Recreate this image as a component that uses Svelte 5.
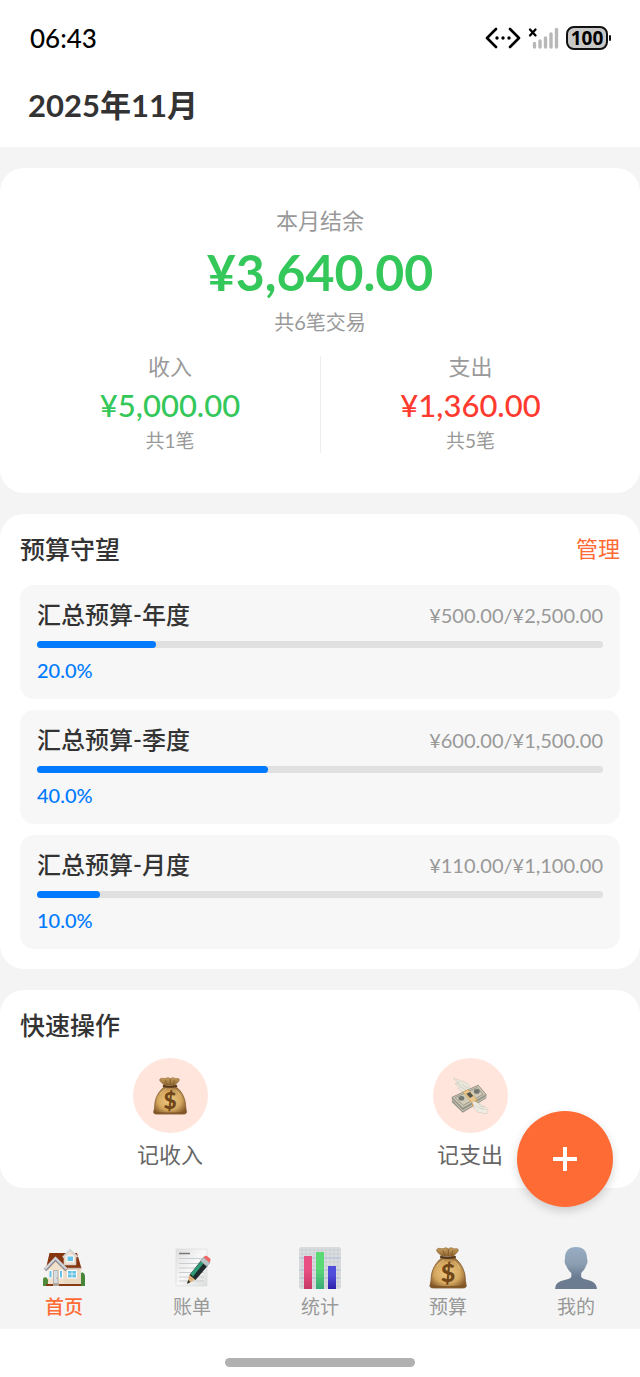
<script>
  const budgets = [
    { name: '汇总预算-年度', used: '500.00', total: '2,500.00', percent: 20 },
    { name: '汇总预算-季度', used: '600.00', total: '1,500.00', percent: 40 },
    { name: '汇总预算-月度', used: '110.00', total: '1,100.00', percent: 10 }
  ];
  const flows = [
    { label: '收入', amount: '¥5,000.00', count: '共1笔', tone: 'income' },
    { label: '支出', amount: '¥1,360.00', count: '共5笔', tone: 'expense' }
  ];
  const tabs = [
    { label: '首页', icon: home },
    { label: '账单', icon: memo },
    { label: '统计', icon: chart },
    { label: '预算', icon: bag },
    { label: '我的', icon: person }
  ];
  let active = $state('首页');
</script>

{#snippet bag()}
  <svg viewBox="0 0 42 42" aria-hidden="true">
    <defs>
      <radialGradient id="bagBody" cx="48%" cy="50%" r="58%">
        <stop offset="0" stop-color="#efc985" />
        <stop offset="0.6" stop-color="#d5a85f" />
        <stop offset="1" stop-color="#84592a" />
      </radialGradient>
      <linearGradient id="bagNeck" x1="0" y1="0" x2="0" y2="1">
        <stop offset="0" stop-color="#c99f5c" />
        <stop offset="1" stop-color="#8d6430" />
      </linearGradient>
    </defs>
    <path d="M14.500 9C12 6 8.500 4.500 10 2.200c1.500-2 4.500.3 6.500-.7 1.700-1 3.300-.8 4.800.4 2-1.500 3.700-1.200 5-.4 1.600.9 3.500-.5 4.700.8 1.500 2-2.500 4-4.300 7.200Z" fill="url(#bagNeck)" stroke="#845b2b" stroke-width=".6" />
    <path d="M16 3.500l1.800 5M21.300 2v6.500M26 3.500l-1.500 5" stroke="#7a5428" stroke-width=".8" fill="none" />
    <path d="M14.500 11h13.300c5.200 4 10.200 11.500 10.500 20.500 0 3 .8 5.500 1 7.500-.3 1.700-2 2-4 2H7.500c-2.700 0-4.500-.3-4.600-2 .2-2 1.200-4 1.200-7C4.300 22.500 9 15.500 14.500 11Z" fill="url(#bagBody)" stroke="#7d5628" stroke-width=".8" />
    <path d="M3.500 38.800c6 1.500 28 1.600 35 0" fill="none" stroke="#805629" stroke-width="1.500" />
    <path d="M14 10q7 1.700 14 0" fill="none" stroke="#56391a" stroke-width="2.200" stroke-linecap="round" />
    <path d="M10 19q3-4 7-6M33 22q-2-5-6-8" fill="none" stroke="#eed092" stroke-width="1" opacity=".7" />
    <text x="21" y="35" text-anchor="middle" font-family="Lato, sans-serif" font-size="25" font-weight="900" fill="#714719">$</text>
  </svg>
{/snippet}

{#snippet cash()}
  <svg viewBox="0 0 42 42" aria-hidden="true">
    <path d="M3 1c1 4 4 4 4.500 6.500l-3-.5c1 3 4 3 5 5l-2 .3c2 2.500 6 4.500 9.500 5l5-3.500c-2-1.500-1-6.500-5-7.500-2-.5-2.500-1-4-2.500L12 5.500C10 2 6 4 3 1Z" fill="#e9e6dc" stroke="#cdc9bc" stroke-width=".6" />
    <path d="M7 5q2 6 10 10M12 7.500q2 3 7 5" stroke="#c2beb1" stroke-width=".7" fill="none" />
    <path d="M1 22.500 30 9l9 10.500v4L13 39.500 1 28Z" fill="#98958a" />
    <path d="M1.500 25l11.500 12.300L38.500 22" stroke="#d0cdc2" stroke-width="1" fill="none" />
    <path d="M1 22.500 30 9l9 10.500L13 34.500Z" fill="#cfc9b5" stroke="#85837a" stroke-width=".8" />
    <path d="M4.500 22.800 29 11.500l6.500 7.700L13.500 31.500Z" fill="none" stroke="#8d8d82" stroke-width=".9" />
    <ellipse cx="11.500" cy="23.500" rx="3.200" ry="2.600" fill="#717770" />
    <ellipse cx="28.500" cy="16" rx="3.200" ry="2.600" fill="#717770" />
    <path d="M13.500 16.700 19 14l9.500 11.500-5.300 3.300Z" fill="#e9c68c" stroke="#d9a557" stroke-width=".8" />
    <path d="m17 18.500 4-1.800 3.500 4.300-3.500 2.200Z" fill="#53574e" />
    <path d="M23.200 28.500v4l5.300-3.200v-3.500Z" fill="#d39b4b" />
    <path d="M23 28c2 .5 1 4 3.500 5.500l-2 .5c2 1 2.500 3 5 3l-1 1.500c3 1.500 4 0 6 1.500l5.500.5c-1-2 1.500-2.500 1-4l-3-1c1.500-1 1-2.500-.5-2.500-3 .5-3-3.500-6-3.500-3 0-4-4-8.500-1.500Z" fill="#efece3" stroke="#cbc7ba" stroke-width=".6" />
    <path d="M27 31q4 4 10 5M30 29.500q3 4 7 4" stroke="#c2beb1" stroke-width=".7" fill="none" />
  </svg>
{/snippet}

{#snippet home()}
  <svg viewBox="0 0 42 42" aria-hidden="true">
    <path d="M0 39v-6q0-3 2.200-2.800Q4.500 30 5 33v6Z" fill="#4f8b3b" />
    <path d="M37 39V28q.5-3 2.500-2.500Q42 26 42 30v9Z" fill="#478638" />
    <path d="M5 21h33v17H5Z" fill="#ead9c5" />
    <path d="M6.500 6H34l4.500 15.500H3Z" fill="#86350f" />
    <path d="M21 21.500h17" stroke="#c9bfb5" stroke-width="1.500" />
    <path d="M21 10 27 4l6 5.500V18H21Z" fill="#f0e2d2" stroke="#c5bcb3" stroke-width=".7" />
    <path d="m20 10.500 7-7.500 7.500 7" fill="none" stroke="#d8d7d8" stroke-width="2" />
    <path d="M24 9h6.500v5.500H24Z" fill="#68c5e9" stroke="#f8fafa" stroke-width="1" />
    <path d="M5 21 12.500 13l9 8.500V38H5Z" fill="#f0dfca" />
    <path d="M2 23 12.500 12l11 11" fill="none" stroke="#8f8c90" stroke-width="3.400" />
    <path d="M2 22 12.500 11l11 11" fill="none" stroke="#d1d3d9" stroke-width="2.200" />
    <path d="M6 23.500h3v7.500H6ZM16.500 23.500h3v7.500h-3ZM24.500 23.500h9v7.500h-9Z" fill="#65c1e7" stroke="#fff" stroke-width="1" />
    <path d="M29 23.500v7.500M24.500 27h9" stroke="#e9f4f4" stroke-width=".8" />
    <path d="M10.500 23.500H15V37h-4.500Z" fill="#d9dde0" stroke="#a8aaab" stroke-width=".8" />
    <circle cx="14" cy="31" r=".6" fill="#8d7451" />
    <path d="M3 37h35v2H3Z" fill="#873b14" />
    <path d="M10 36h6v3h-6Z" fill="#b0a59a" />
  </svg>
{/snippet}

{#snippet memo()}
  <svg viewBox="0 0 42 42" aria-hidden="true">
    <defs>
      <linearGradient id="paper" x1="0" y1="0" x2="1" y2="1">
        <stop offset="0" stop-color="#dfdfdf" />
        <stop offset=".5" stop-color="#f8f8f8" />
        <stop offset="1" stop-color="#dcdddd" />
      </linearGradient>
    </defs>
    <path d="M5 2h31v37H5Z" fill="url(#paper)" stroke="#d8d9d9" stroke-width=".6" />
    <path d="M8 6.500h11" stroke="#747879" stroke-width="1.500" />
    <path d="M8 11.500h25M8 16.500h25M8 21h25M8 25.500h25M8 30h25M8 34h25" stroke="#c9cdcf" stroke-width="1" />
    <path d="m16 37 2.500-9.500 6 5Z" fill="#dfb078" />
    <path d="m16 37 1.200-4 2.300 1.900Z" fill="#24302e" />
    <path d="M18.500 28 30 13.500l6.500 5.500L24.500 33Z" fill="#20292b" />
    <path d="m19.500 27 11-13.500 2.500 2.200L22 29.500Z" fill="#2f9b76" />
    <path d="m29.500 14 3-3.700 6.500 5.400-3.300 3.600Z" fill="#b8c4c6" stroke="#84949a" stroke-width=".6" />
    <path d="m32.500 10.300 1.500-1.300q1-.7 2.200.2l2.500 2q1.400 1.500.6 2.900l-1 1.300Z" fill="#ef6561" />
  </svg>
{/snippet}

{#snippet chart()}
  <svg viewBox="0 0 42 42" aria-hidden="true">
    <defs>
      <linearGradient id="barGreen" x1="0" y1="0" x2="0" y2="1">
        <stop offset=".45" stop-color="#5bd975" />
        <stop offset="1" stop-color="#39aa79" />
      </linearGradient>
      <linearGradient id="barRed" x1="0" y1="0" x2="0" y2="1">
        <stop offset=".4" stop-color="#e94f83" />
        <stop offset="1" stop-color="#c73866" />
      </linearGradient>
      <linearGradient id="barBlue" x1="0" y1="0" x2="0" y2="1">
        <stop offset=".4" stop-color="#504ddb" />
        <stop offset="1" stop-color="#2c20aa" />
      </linearGradient>
    </defs>
    <rect width="42" height="42" rx="3" fill="#dcdddf" />
    <path d="M3 0v42M7 0v42M11 0v42M15 0v42M19 0v42M23 0v42M27 0v42M31 0v42M35 0v42M39 0v42M0 3h42M0 7h42M0 15h42M0 19h42M0 27h42M0 31h42M0 35h42M0 39h42" stroke="#c5c9cf" stroke-width=".6" />
    <path d="M0 11h42M0 23h42M1 31h40" stroke="#a8b9dc" stroke-width=".9" />
    <path d="M5 9h8v33H5Z" fill="url(#barRed)" />
    <path d="M17 5h8v37h-8Z" fill="url(#barGreen)" />
    <path d="M29 19h8v23h-8Z" fill="url(#barBlue)" />
  </svg>
{/snippet}

{#snippet person()}
  <svg viewBox="0 0 42 42" aria-hidden="true">
    <defs>
      <linearGradient id="bust" x1="0" y1="0" x2="0" y2="1">
        <stop offset="0" stop-color="#98adc3" />
        <stop offset=".4" stop-color="#8c9eb2" />
        <stop offset=".72" stop-color="#6b7c92" />
        <stop offset="1" stop-color="#6d7b8f" />
      </linearGradient>
    </defs>
    <path d="M21 0c7.500 0 11 4.500 11 11l.5 2.500c.3 3-1 4.500-2 6.500-1 2.500-2.800 4.500-4.300 6v4c1.500 3.500 13.300 2 15.300 9.500L42 42H0l.5-2.500c2-7.500 14.300-6 15.800-9.500v-4c-1.700-1.500-3.500-3.500-4.600-6.200-1-1.800-2.400-3.300-2-6.300L10 11C10 4.500 13.500 0 21 0Z" fill="url(#bust)" />
  </svg>
{/snippet}

<div class="app">
  <header>
    <div class="status">
      <time>06:43</time>
      <div class="signals">
        <svg class="link" viewBox="0 0 36 22" aria-hidden="true">
          <path d="M11 2 2 11l9 9M25 2l9 9-9 9" fill="none" stroke="#000" stroke-width="2.600" stroke-linecap="round" stroke-linejoin="round" />
          <circle cx="12" cy="11" r="1.700" /><circle cx="18" cy="11" r="1.700" /><circle cx="24" cy="11" r="1.700" />
        </svg>
        <svg class="cell" viewBox="0 0 30 22" aria-hidden="true">
          <path d="m1.500 2.500 5.500 6M7 2.500l-5.500 6" stroke="#000" stroke-width="2.300" stroke-linecap="round" />
          <path d="M6 16.500V20M11.500 14v6M17 11v9M22.500 7v13M28 2.500V20" stroke="#b8b8b8" stroke-width="3.400" stroke-linecap="round" />
        </svg>
        <div class="battery"><span>100</span></div>
      </div>
    </div>
    <h1>2025年11月</h1>
  </header>

  <main>
    <section class="card summary">
      <p class="label">本月结余</p>
      <p class="balance">¥3,640.00</p>
      <p class="total">共6笔交易</p>
      <div class="flows">
        {#each flows as flow}
          <div class="flow">
            <p class="label">{flow.label}</p>
            <p class="amount {flow.tone}">{flow.amount}</p>
            <p class="count">{flow.count}</p>
          </div>
        {/each}
      </div>
    </section>

    <section class="card">
      <div class="heading">
        <h2>预算守望</h2>
        <button class="manage">管理</button>
      </div>
      <div class="budgets">
        {#each budgets as b}
          <article class="budget">
            <div class="line">
              <h3>{b.name}</h3>
              <span class="figures">¥{b.used}/¥{b.total}</span>
            </div>
            <div class="track" role="progressbar" aria-label={b.name} aria-valuenow={b.percent} aria-valuemin="0" aria-valuemax="100">
              <div class="fill" style="--share: {b.percent / 100}"></div>
            </div>
            <p class="percent">{b.percent.toFixed(1)}%</p>
          </article>
        {/each}
      </div>
    </section>

    <section class="card">
      <h2>快速操作</h2>
      <div class="actions">
        <button class="action"><span class="disc">{@render bag()}</span>记收入</button>
        <button class="action"><span class="disc">{@render cash()}</span>记支出</button>
      </div>
    </section>
  </main>

  <nav>
    {#each tabs as tab}
      <button class="tab" class:active={active === tab.label} onclick={() => (active = tab.label)}>
        {@render tab.icon()}
        {tab.label}
      </button>
    {/each}
  </nav>

  <footer><div class="handle"></div></footer>

  <button class="add" aria-label="记一笔">
    <svg viewBox="0 0 24 24" aria-hidden="true"><path d="M12 1v22M1 12h22" stroke="#fff" stroke-width="4" stroke-linecap="round" /></svg>
  </button>
</div>

<style>
  :global(body) {
    margin: 0;
    background: #f4f4f4;
  }
  .app {
    position: relative;
    display: flex;
    flex-direction: column;
    min-height: 100vh;
    color: #333;
    font-family: Lato, 'Noto Sans CJK SC', sans-serif;
  }
  h1, h2, h3, p {
    margin: 0;
  }
  button {
    padding: 0;
    border: 0;
    background: none;
    font: inherit;
    cursor: pointer;
  }
  svg {
    display: block;
  }
  header {
    background: #fff;
    padding: 20px 28px 22px;
  }
  .status {
    display: flex;
    justify-content: space-between;
    align-items: center;
    height: 36px;
    padding-left: 2px;
    color: #000;
    font-size: 26px;
    font-weight: 500;
  }
  .signals {
    display: flex;
    align-items: center;
    gap: 7px;
  }
  .link {
    width: 36px;
    height: 22px;
  }
  .cell {
    width: 31px;
    height: 22px;
  }
  .battery {
    position: relative;
    display: grid;
    place-items: center;
    box-sizing: border-box;
    width: 42px;
    height: 24px;
    margin-right: 4px;
    border: 2px solid #111;
    border-radius: 8px;
    background: #c8c8c8;
    font: 700 19px/20px 'Noto Sans', sans-serif;
  }
  .battery::after {
    content: '';
    position: absolute;
    right: -5px;
    top: 7px;
    width: 2px;
    height: 6px;
    background: #111;
    border-radius: 1px;
  }
  h1 {
    margin-top: 29px;
    font-size: 31px;
    line-height: 40px;
    font-weight: 700;
  }
  main {
    flex: 1;
    display: flex;
    flex-direction: column;
    gap: 21px;
    padding: 21px 0;
  }
  .card {
    padding: 20px;
    border-radius: 24px;
    background: #fff;
  }
  .summary {
    padding: 40px 20px;
    text-align: center;
  }
  .label {
    color: #999;
    font-size: 22px;
    line-height: 26px;
  }
  .balance {
    margin: 8px 0;
    color: #34c759;
    font-size: 50px;
    line-height: 60px;
    font-weight: 700;
  }
  .total {
    color: #999;
    font-size: 20px;
    line-height: 24px;
  }
  .flows {
    display: grid;
    grid-template-columns: 1fr 1fr;
    margin-top: 22px;
  }
  .flow + .flow {
    border-left: 1px solid #eee;
  }
  .flow .label {
    line-height: 22px;
  }
  .amount {
    margin: 9px 0 6px;
    font-size: 31px;
    line-height: 36px;
    font-weight: 500;
  }
  .income {
    color: #34c759;
  }
  .expense {
    color: #ff3b30;
  }
  .count {
    color: #999;
    font-size: 19px;
    line-height: 24px;
  }
  .heading, .line {
    display: flex;
    justify-content: space-between;
    align-items: center;
  }
  h2 {
    font-size: 25px;
    line-height: 30px;
    font-weight: 500;
  }
  .manage {
    color: #ff6b35;
    font-size: 22px;
    line-height: 30px;
  }
  .budgets {
    display: grid;
    gap: 11px;
    margin-top: 21px;
  }
  .budget {
    padding: 15px 17px 17px;
    border-radius: 14px;
    background: #f7f7f7;
  }
  h3 {
    font-size: 24px;
    line-height: 30px;
    font-weight: 500;
  }
  .figures {
    color: #999;
    font-size: 20px;
    line-height: 30px;
  }
  .track {
    height: 7px;
    margin: 11px 0 10px;
    border-radius: 4px;
    background: #e0e0e0;
  }
  .fill {
    width: calc(7px + (100% - 7px) * var(--share));
    height: 100%;
    border-radius: 4px;
    background: #007aff;
  }
  .percent {
    color: #007aff;
    font-size: 20px;
    line-height: 24px;
    font-weight: 500;
  }
  .actions {
    display: grid;
    grid-template-columns: 1fr 1fr;
    justify-items: center;
    margin-top: 18px;
  }
  .action {
    display: grid;
    justify-items: center;
    gap: 9px;
    color: #666;
    font-size: 22px;
    line-height: 26px;
  }
  .disc {
    display: grid;
    place-items: center;
    width: 75px;
    height: 75px;
    border-radius: 50%;
    background: #ffe5dc;
  }
  .disc svg {
    width: 38px;
    height: 38px;
  }
  nav {
    display: grid;
    grid-template-columns: repeat(5, 1fr);
    padding: 0 0 11px;
  }
  .tab {
    display: grid;
    justify-items: center;
    gap: 7px;
    color: #999;
    font-size: 19px;
    line-height: 22px;
  }
  .tab svg {
    width: 42px;
    height: 42px;
  }
  .tab.active {
    color: #ff6b35;
    font-weight: 500;
  }
  footer {
    display: flex;
    justify-content: center;
    padding: 29px 0 10px;
    background: #fff;
  }
  .handle {
    width: 190px;
    height: 9px;
    border-radius: 5px;
    background: #b1b1b1;
  }
  .add {
    position: absolute;
    right: 27px;
    bottom: 170px;
    display: grid;
    place-items: center;
    width: 96px;
    height: 96px;
    border-radius: 50%;
    background: #ff6b35;
    box-shadow: 0 4px 10px rgba(0, 0, 0, 0.16);
  }
  .add svg {
    width: 24px;
    height: 24px;
  }
</style>
